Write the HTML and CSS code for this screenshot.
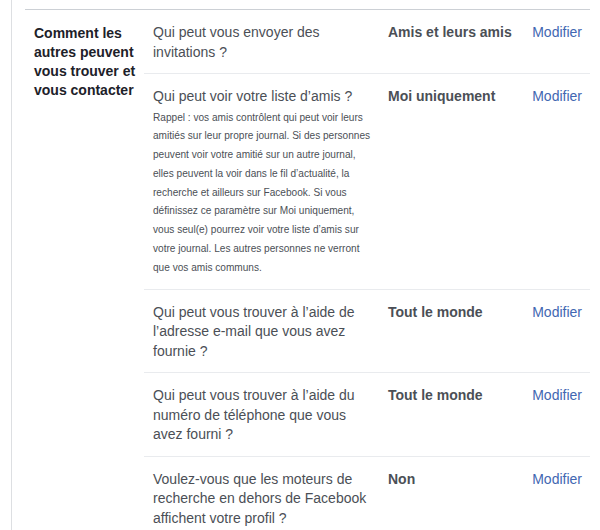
FILE: index.html
```html
<!DOCTYPE html>
<html lang="fr">
<head>
<meta charset="utf-8">
<link rel="stylesheet" href="styles.css">
</head>
<body>
<div class="page">
  <section class="section">
    <h3 class="section-label">Comment les autres peuvent vous trouver et vous contacter</h3>
    <div class="rows">
      <div class="row">
        <div class="question">Qui peut vous envoyer des invitations ?</div>
        <div class="value">Amis et leurs amis</div>
        <a class="edit" href="#">Modifier</a>
      </div>
      <div class="row">
        <div class="question">Qui peut voir votre liste d’amis ?
          <p class="note">Rappel : vos amis contrôlent qui peut voir leurs amitiés sur leur propre journal. Si des personnes peuvent voir votre amitié sur un autre journal, elles peuvent la voir dans le fil d’actualité, la recherche et ailleurs sur Facebook. Si vous définissez ce paramètre sur Moi uniquement, vous seul(e) pourrez voir votre liste d’amis sur votre journal. Les autres personnes ne verront que vos amis communs.</p>
        </div>
        <div class="value">Moi uniquement</div>
        <a class="edit" href="#">Modifier</a>
      </div>
      <div class="row">
        <div class="question">Qui peut vous trouver à l’aide de l’adresse e-mail que vous avez fournie ?</div>
        <div class="value">Tout le monde</div>
        <a class="edit" href="#">Modifier</a>
      </div>
      <div class="row">
        <div class="question">Qui peut vous trouver à l’aide du numéro de téléphone que vous avez fourni ?</div>
        <div class="value">Tout le monde</div>
        <a class="edit" href="#">Modifier</a>
      </div>
      <div class="row">
        <div class="question">Voulez-vous que les moteurs de recherche en dehors de Facebook affichent votre profil ?</div>
        <div class="value">Non</div>
        <a class="edit" href="#">Modifier</a>
      </div>
    </div>
  </section>
</div>
</body>
</html>
```
FILE: styles.css
```css
html, body {
  margin: 0;
  padding: 0;
  background: #fff;
}

body {
  font-family: "Liberation Sans", Arial, Helvetica, sans-serif;
  font-size: 14px;
  color: #4b4f56;
}

.page {
  margin-left: 11px;
  border-left: 1px solid #dddfe2;
  padding: 9px 10px 0 13px;
  min-height: 521px;
}

.section {
  display: grid;
  grid-template-columns: 119px 1fr;
  border-top: 1px solid #ccd0d5;
}

.section-label {
  margin: 0;
  padding: 14px 6px 0 9px;
  font-size: 14px;
  font-weight: bold;
  line-height: 19px;
  color: #1d2129;
}

.rows {
  display: flex;
  flex-direction: column;
}

.row {
  display: grid;
  grid-template-columns: 220px 1fr auto;
  column-gap: 15px;
  padding: 13px 8px 11px 9px;
  line-height: 19.5px;
  border-top: 1px solid #e9ebee;
}

.row:first-child {
  border-top: none;
}

.question {
  color: #4b4f56;
}

.note {
  margin: 2px 0 0;
  font-size: 10.1px;
  line-height: 18.8px;
  color: #4b4f56;
}

.value {
  font-weight: bold;
  color: #4b4f56;
}

.edit {
  color: #4267b2;
  text-decoration: none;
}
```
